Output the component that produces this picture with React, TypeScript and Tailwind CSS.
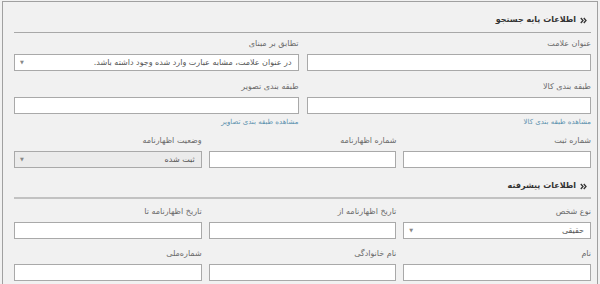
import React from 'react';

const font = { fontFamily: '"DejaVu Sans", "Noto Sans", sans-serif' };

// small double chevron pointing right, drawn so text direction can't flip it
const Chevrons = () => (
    <svg width="7" height="7" viewBox="0 0 7 7" className="ml-[4px] shrink-0" fill="none" stroke="#333" strokeWidth="1.3">
        <polyline points="0.8,1 3,3.5 0.8,6" />
        <polyline points="3.8,1 6,3.5 3.8,6" />
    </svg>
);

const SectionHeader = ({ title, className }: { title: string; className: string }) => {
    return (
        <div className={`ml-[7px] ${className}`}>
            <div className="flex items-center pr-[4px] text-[8px] leading-[12px] font-bold text-[#333]">
                <Chevrons />
                <span>{title}</span>
            </div>
        </div>
    );
};

const TextField = ({ label }: { label: string }) => {
    return (
        <div>
            <label className="block h-[14px] text-[8px] leading-[14px] text-[#6a6a6a]">{label}</label>
            <input
                type="text"
                className="mt-[3px] block w-full h-[17px] bg-white border border-[#a9a9a9] outline-none"
            />
        </div>
    );
};

const SelectField = ({ label, value, disabled }: { label: string; value: string; disabled?: boolean }) => {
    return (
        <div>
            <label className="block h-[14px] text-[8px] leading-[14px] text-[#6a6a6a]">{label}</label>
            <div
                className={`mt-[3px] flex items-center justify-between h-[17px] pr-[6px] pl-[5px] border border-[#a9a9a9] ${
                    disabled ? 'bg-[#ebebeb]' : 'bg-white'
                }`}
            >
                <span className="text-[8px] leading-[15px] text-[#555] whitespace-nowrap">{value}</span>
                <span className="text-[5px] text-[#888]">▼</span>
            </div>
        </div>
    );
};

const App = () => {
    return (
        <div dir="rtl" style={font} className="w-[600px] h-[284px] overflow-hidden bg-[#f1f1f1] pt-px pl-[2px] pr-[2px]">
            <div className="h-[300px] border border-[#a0a0a0] pr-[6px] pl-[4px]">
                <SectionHeader title="اطلاعات پایه جستجو" className="pt-[12px] pb-[6px] border-b border-[#a8a8a8]" />

                <div className="pl-[7px]">
                    <div className="grid grid-cols-2 gap-[8px] mt-[4px]">
                        <TextField label="عنوان علامت" />
                        <SelectField label="تطابق بر مبنای" value="در عنوان علامت، مشابه عبارت وارد شده وجود داشته باشد." />
                    </div>

                    <div className="grid grid-cols-2 gap-[8px] mt-[9px]">
                        <div>
                            <TextField label="طبقه بندی کالا" />
                            <a className="block mt-[3px] text-[7px] leading-[10px] text-[#5a90ad]">مشاهده طبقه بندی کالا</a>
                        </div>
                        <div>
                            <TextField label="طبقه بندی تصویر" />
                            <a className="block mt-[3px] text-[7px] leading-[10px] text-[#5a90ad]">مشاهده طبقه بندی تصاویر</a>
                        </div>
                    </div>

                    <div className="grid grid-cols-3 gap-[7px] mt-[7px]">
                        <TextField label="شماره ثبت" />
                        <TextField label="شماره اظهارنامه" />
                        <SelectField label="وضعیت اظهارنامه" value="ثبت شده" disabled />
                    </div>
                </div>

                <SectionHeader title="اطلاعات پیشرفته" className="pt-[12px] pb-[5px] border-b-2 border-[#c2c2c2]" />

                <div className="pl-[7px]">
                    <div className="grid grid-cols-3 gap-[7px] mt-[6px]">
                        <SelectField label="نوع شخص" value="حقیقی" />
                        <TextField label="تاریخ اظهارنامه از" />
                        <TextField label="تاریخ اظهارنامه تا" />
                    </div>

                    <div className="grid grid-cols-3 gap-[7px] mt-[8px]">
                        <TextField label="نام" />
                        <TextField label="نام خانوادگی" />
                        <TextField label="شماره‌ملی" />
                    </div>
                </div>
            </div>
        </div>
    );
};

export default App;
